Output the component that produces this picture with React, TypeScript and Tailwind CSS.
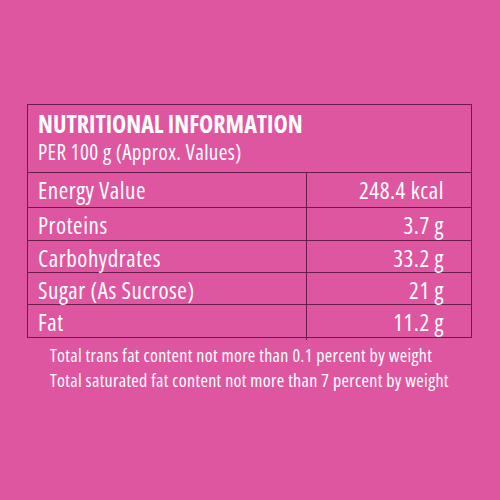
const rows = [
  { label: 'Energy Value', value: '248.4 kcal', h: 'h-[35px]' },
  { label: 'Proteins', value: '3.7 g', h: 'h-[33px]' },
  { label: 'Carbohydrates', value: '33.2 g', h: 'h-[32px]' },
  { label: 'Sugar (As Sucrose)', value: '21 g', h: 'h-[32px]' },
  { label: 'Fat', value: '11.2 g', h: 'h-[32px]' },
];

export default function App() {
  return (
    <div className="w-[500px] h-[500px] bg-[#df56a0] text-white font-['Open_Sans',sans-serif] font-stretch-condensed">
      <div className="pt-[104px] pl-[27px]">
        <div className="w-[445px] border-[1.5px] border-[#6a1d4a]">
          {/* heading */}
          <div className="h-[68px] pl-[10px] pt-[4px] border-b-[1.5px] border-[#6a1d4a]">
            <div className="text-[24px] font-bold leading-[29px]">NUTRITIONAL INFORMATION</div>
            <div className="text-[21px] leading-[29px] tracking-[0.4px]">PER 100 g (Approx. Values)</div>
          </div>

          {rows.map((r, i) => (
            <div
              key={r.label}
              className={`grid grid-cols-[279px_1fr] ${r.h} text-[23px] tracking-[0.55px] ${i < rows.length - 1 ? 'border-b-[1.5px] border-[#6a1d4a]' : ''}`}
            >
              <div className="pl-[10px] flex items-center border-r-[1.5px] border-[#6a1d4a]">{r.label}</div>
              <div className="pr-[27px] flex items-center justify-end">{r.value}</div>
            </div>
          ))}
        </div>

        <div className="pl-[23px] pt-[5px] text-[18px] leading-[25px] tracking-[0.32px]">
          <p>Total trans fat content not more than 0.1 percent by weight</p>
          <p>Total saturated fat content not more than 7 percent by weight</p>
        </div>
      </div>
    </div>
  );
}
